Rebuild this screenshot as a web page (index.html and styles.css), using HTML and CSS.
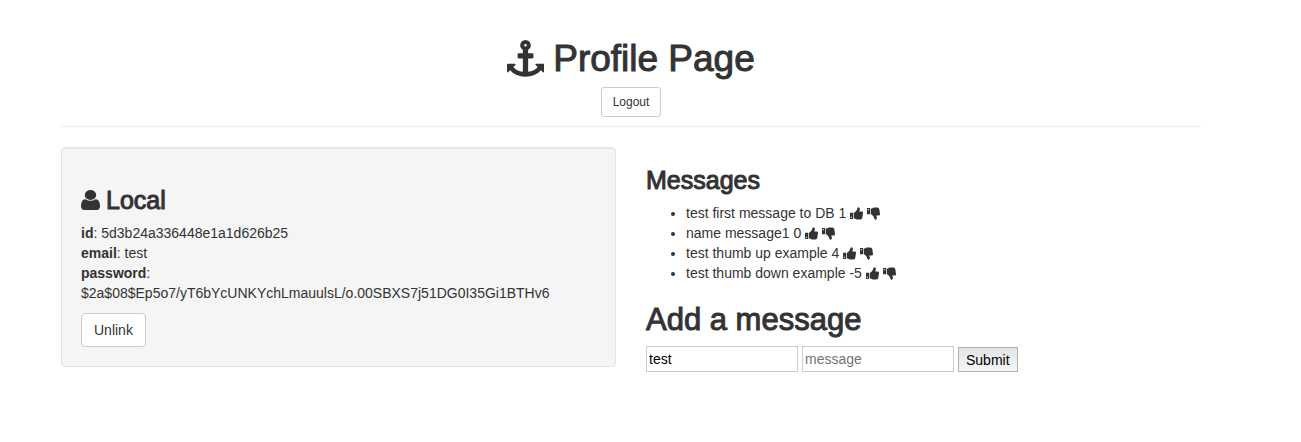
FILE: index.html
```html
<!DOCTYPE html>
<html lang="en">
<head>
<meta charset="utf-8">
<title>Profile Page</title>
<link rel="stylesheet" href="styles.css">
</head>
<body>
<svg class="sprite" aria-hidden="true">
  <symbol id="thumb-up" viewBox="0 0 13 13">
    <path fill-rule="evenodd" d="M0 5.800h3V12H0zM.8 9.800v1.200h1V9.800z"/>
    <path d="M3.700 6Q5.600 4.900 6.800 3L7.500.9Q8.200-.1 9.200.5q1 .8.600 2.200L9.200 4.600h2.600q1.300.1 1.200 1.300l-.7 4.800Q12 12.400 10.500 12.400H7.200Q6 12.400 5 11.400H3.700z"/>
  </symbol>
  <symbol id="thumb-down" viewBox="0 0 13 13">
    <path fill-rule="evenodd" d="M0 1h3v6.200H0zM.8 2v1.200h1V2z"/>
    <path d="M3.700 7Q5.600 8.100 6.800 10l.7 2.100q.7 1 1.700.4 1-.8.600-2.200L9.200 8.400h2.600q1.300-.1 1.200-1.300l-.7-4.800Q12 .6 10.500.6H7.200Q6 .6 5 1.600H3.700z"/>
  </symbol>
</svg>
<div class="container">
  <header class="page-header">
    <h1><svg class="icon-anchor" viewBox="0 0 1792 1792" aria-hidden="true"><path d="M960 256q0-26-19-45t-45-19-45 19-19 45 19 45 45 19 45-19 19-45zm832 928v352q0 22-20 30-8 2-12 2-13 0-23-9l-93-93q-119 143-318.500 226.500t-429.500 83.500-429.500-83.500-318.500-226.500l-93 93q-9 9-23 9-4 0-12-2-20-8-20-30v-352q0-14 9-23t23-9h352q22 0 30 20 8 19-7 35l-100 100q67 91 189.500 153.500t271.500 82.500v-647h-192q-26 0-45-19t-19-45v-128q0-26 19-45t45-19h192v-163q-58-34-93-92.500t-35-128.500q0-106 75-181t181-75 181 75 75 181q0 70-35 128.500t-93 92.500v163h192q26 0 45 19t19 45v128q0 26-19 45t-45 19h-192v647q149-20 271.500-82.500t189.500-153.500l-100-100q-15-16-7-35 8-20 30-20h352q14 0 23 9t9 23z"/></svg> Profile Page</h1>
    <a href="#logout" class="btn btn-sm">Logout</a>
  </header>
  <div class="row">
    <section class="well">
      <h3><svg class="icon-user" viewBox="256 128 1280 1536" preserveAspectRatio="none" aria-hidden="true"><path d="M1536 1399q0 109-62.500 187t-150.500 78h-854q-88 0-150.500-78t-62.500-187q0-85 8.500-160.500t31.500-152 58.500-131 94-89 134.500-34.500q131 128 313 128t313-128q76 0 134.500 34.500t94 89 58.500 131 31.500 152 8.500 160.500zm-256-887q0 159-112.500 271.500t-271.500 112.500-271.500-112.500-112.500-271.500 112.500-271.500 271.500-112.500 271.500 112.500 112.500 271.500z"/></svg> Local</h3>
      <p><strong>id</strong>: 5d3b24a336448e1a1d626b25<br>
      <strong>email</strong>: test<br>
      <strong>password</strong>:<br>$2a$08$Ep5o7/yT6bYcUNKYchLmauulsL/o.00SBXS7j51DG0I35Gi1BTHv6</p>
      <a href="#unlink" class="btn">Unlink</a>
    </section>
    <section class="messages">
      <h3>Messages</h3>
      <ul>
        <li>test first message to DB 1 <button class="vote" aria-label="Thumb up"><svg><use href="#thumb-up"/></svg></button> <button class="vote" aria-label="Thumb down"><svg><use href="#thumb-down"/></svg></button></li>
        <li>name message1 0 <button class="vote" aria-label="Thumb up"><svg><use href="#thumb-up"/></svg></button> <button class="vote" aria-label="Thumb down"><svg><use href="#thumb-down"/></svg></button></li>
        <li>test thumb up example 4 <button class="vote" aria-label="Thumb up"><svg><use href="#thumb-up"/></svg></button> <button class="vote" aria-label="Thumb down"><svg><use href="#thumb-down"/></svg></button></li>
        <li>test thumb down example -5 <button class="vote" aria-label="Thumb up"><svg><use href="#thumb-up"/></svg></button> <button class="vote" aria-label="Thumb down"><svg><use href="#thumb-down"/></svg></button></li>
      </ul>
      <h2>Add a message</h2>
      <form class="message-form">
        <input type="text" value="test" aria-label="Name">
        <input type="text" placeholder="message" aria-label="Message">
        <button type="submit" class="submit">Submit</button>
      </form>
    </section>
  </div>
</div>
</body>
</html>
```

FILE: styles.css
```css
* { box-sizing: border-box; }
body {
  margin: 0;
  padding: 40px 39px 20px 0;
  background: #fff;
  color: #333;
  font: 14px/20px "Helvetica Neue", "Liberation Sans", Arial, sans-serif;
}
.sprite { display: none; }
svg { fill: currentColor; }
.container { max-width: 1170px; margin: 0 auto; padding: 0 15px; }
h1, h2, h3 { margin: 0 0 10px; font-weight: 500; -webkit-text-stroke: 1px #333; }
h1 { font-size: 37px; line-height: 37px; }
h2 { font-size: 31px; line-height: 33px; margin-top: 20px; }
h3 { font-size: 25px; line-height: 26px; margin-top: 20px; }
.page-header {
  margin-bottom: 20px;
  padding-bottom: 9px;
  border-bottom: 1px solid #eee;
  text-align: center;
}
.page-header h1 { display: flex; justify-content: center; align-items: center; gap: 9px; }
.icon-anchor { width: 37px; height: 37px; }
.well h3 { display: flex; align-items: center; gap: 6px; }
.icon-user { width: 19px; height: 20px; }
.btn {
  display: inline-block;
  padding: 6px 12px;
  border: 1px solid #ccc;
  border-radius: 4px;
  background: #fff;
  color: #333;
  text-decoration: none;
  vertical-align: top;
}
.btn-sm { padding: 5px 11px; font-size: 12px; line-height: 18px; border-radius: 3px; }
.row { display: grid; grid-template-columns: 1fr 1fr; gap: 30px; align-items: start; }
.well {
  padding: 19px;
  border: 1px solid #e3e3e3;
  border-radius: 4px;
  background: #f5f5f5;
  box-shadow: inset 0 1px 1px rgba(0, 0, 0, .05);
}
p { margin: 0 0 10px; overflow-wrap: anywhere; }
ul { margin: 0 0 10px; padding-left: 40px; }
.vote {
  padding: 0;
  border: 0;
  background: none;
  color: inherit;
  font: inherit;
  vertical-align: top;
  height: 20px;
}
.vote svg { display: block; width: 13px; height: 13px; margin: 4px 0 3px; }
.message-form { display: flex; flex-wrap: wrap; align-items: flex-end; gap: 4px; }
.message-form input {
  width: 152px;
  height: 26px;
  padding: 1px 2px;
  border: 1px solid #ccc;
  background: #fff;
  color: #000;
  font: inherit;
}
.message-form input::placeholder { color: #757575; }
.submit {
  height: 25px;
  padding: 0 7px;
  border: 1px solid #adb2b2;
  background: linear-gradient(#e3e3e3, #f6f6f6);
  color: #000;
  font: inherit;
}
```
